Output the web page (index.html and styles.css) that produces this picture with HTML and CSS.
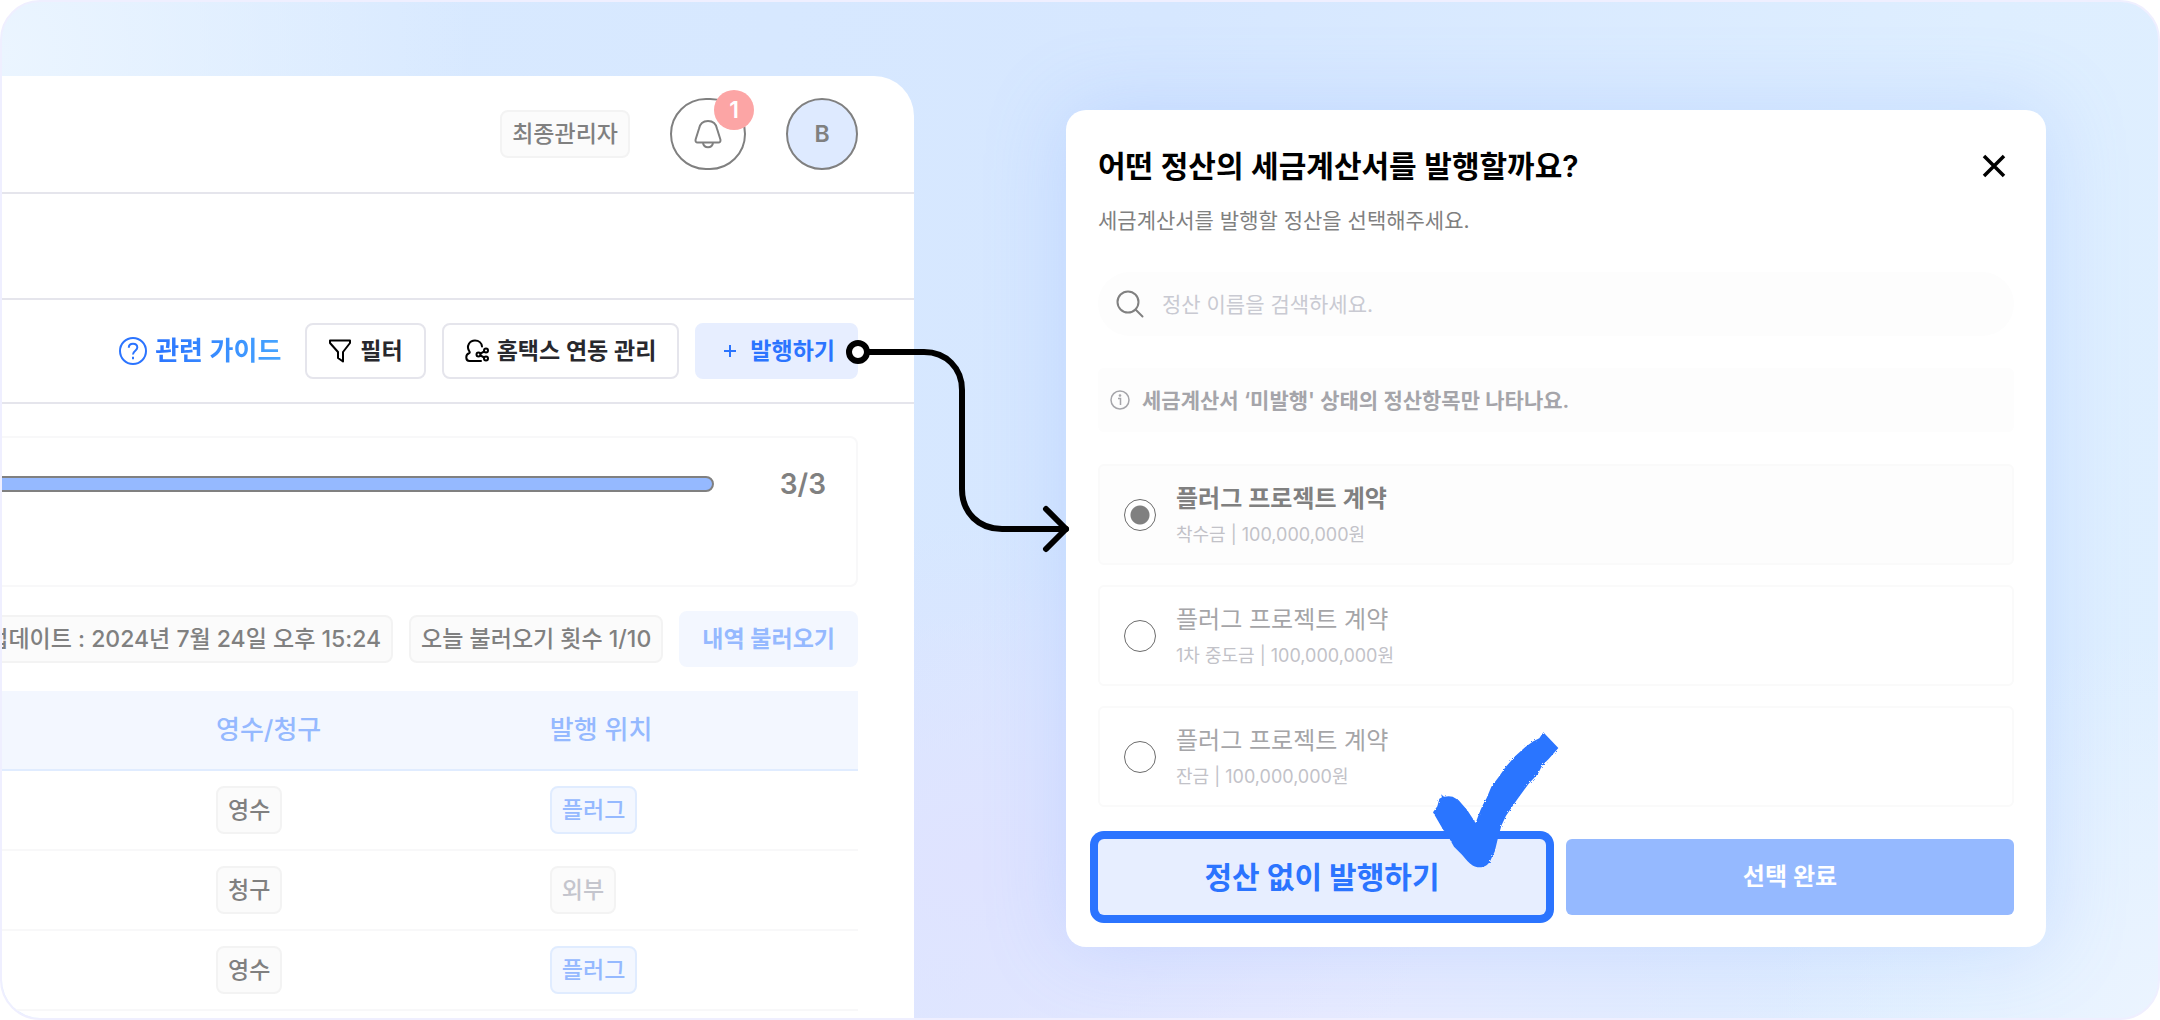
FILE: index.html
```html
<!DOCTYPE html>
<html lang="ko">
<head>
    <meta charset="utf-8" />
    <meta name="viewport" content="width=device-width, initial-scale=1" />
    <title>세금계산서 발행</title>
    <link rel="stylesheet" href="styles.css">
</head>
<body>
    <div class="scene">
        <main class="admin">
            <header class="topbar">
                <span class="tag">최종관리자</span>
                <button class="round bell" type="button" aria-label="알림">
                    <svg width="28" height="30" viewBox="0 0 28 30" fill="none" stroke="currentColor" stroke-width="2" stroke-linejoin="round">
                        <path d="M14 2C9 2 5.800 5.200 4.900 10L1.600 20.500C1.200 22.500 2 23.500 3.500 23.500H24.500C26 23.500 26.800 22.500 26.400 20.500L23.100 10C22.200 5.200 19 2 14 2Z" />
                        <path d="M9 24C9.500 27 11.500 28.300 14 28.300S18.500 27 19 24" />
                    </svg>
                    <span class="count">1</span>
                </button>
                <button class="round avatar" type="button">B</button>
            </header>
            <div class="subbar"></div>
            <div class="toolbar">
                <a class="guide" href="#">
                    <svg width="28" height="28" viewBox="0 0 28 28" fill="none" stroke="#2b74ff" stroke-width="2">
                        <circle cx="14" cy="14" r="13" />
                        <path d="M9.800 10.800C9.800 8.300 11.600 6.800 14 6.800S18.300 8.300 18.300 10.600C18.300 13.700 14 13.700 14 17.400" />
                        <path d="M14 19.800V22.200" />
                    </svg>
                    <span>관련 가이드</span>
                </a>
                <button class="btn" type="button">
                    <svg width="24" height="24" viewBox="0 0 24 24" fill="none" stroke="#000" stroke-width="2" stroke-linejoin="round">
                        <path d="M2 1.500H22V4L15 13V22.500L10 19V13L2 4Z" />
                    </svg>
                    필터
                </button>
                <button class="btn" type="button">
                    <svg width="24" height="24" viewBox="0 0 24 24" fill="none" stroke="#000" stroke-width="2" stroke-linecap="round">
                        <path d="M16 22H4.500C.4 22 .2 15.500 4 14.200C5 13.800 5 13.300 4.300 12.200C1 7 4.500 1.600 10 1.600C14 1.600 16.600 4.300 17 7.500" />
                        <circle cx="13.500" cy="15.500" r="2" />
                        <circle cx="21" cy="11.500" r="2" />
                        <circle cx="21" cy="19.500" r="2" />
                        <path d="M15.300 14.600L19.200 12.500M15.300 16.400L19.200 18.500" />
                    </svg>
                    홈택스 연동 관리
                </button>
                <button class="btn btn-issue" type="button">
                    <svg width="24" height="24" viewBox="0 0 24 24" fill="none" stroke="currentColor" stroke-width="2">
                        <path d="M12 6V18M6 12H18" />
                    </svg>
                    발행하기
                </button>
                <!-- arrow to the dialog -->
                <svg class="connector" width="232" height="220" viewBox="0 0 232 220" fill="none" stroke="#000" stroke-width="6" stroke-linecap="round" stroke-linejoin="round">
                    <path d="M26 16H82C104 16 120 32 120 54V153C120 177 137 193 160 193H224" />
                    <path d="M204 173L224 193L204 213" />
                    <circle cx="16" cy="16" r="9" fill="#fff" />
                </svg>
            </div>
            <section class="status">
                <div class="bar"></div>
                <span class="ratio">3/3</span>
            </section>
            <div class="sync">
                <span class="tag">업데이트 : 2024년 7월 24일 오후 15:24</span>
                <span class="tag">오늘 불러오기 횟수 1/10</span>
                <button class="btn btn-soft" type="button">내역 불러오기</button>
            </div>
            <table class="list">
                <thead>
                    <tr><th class="c1"></th><th class="c2">영수/청구</th><th>발행 위치</th></tr>
                </thead>
                <tbody>
                    <tr><td></td><td><span class="tag">영수</span></td><td><span class="tag tag-blue">플러그</span></td></tr>
                    <tr><td></td><td><span class="tag">청구</span></td><td><span class="tag tag-mute">외부</span></td></tr>
                    <tr><td></td><td><span class="tag">영수</span></td><td><span class="tag tag-blue">플러그</span></td></tr>
                </tbody>
            </table>
        </main>

        <form class="modal" role="dialog" aria-labelledby="dialog-title">
            <div class="modal-head">
                <h2 id="dialog-title">어떤 정산의 세금계산서를 발행할까요?</h2>
                <button class="close" type="button" aria-label="닫기">
                    <svg width="24" height="24" viewBox="0 0 24 24" fill="none" stroke="#000" stroke-width="3.500">
                        <path d="M2 2L22 22M22 2L2 22" />
                    </svg>
                </button>
            </div>
            <p class="desc">세금계산서를 발행할 정산을 선택해주세요.</p>
            <label class="search">
                <svg width="28" height="28" viewBox="0 0 28 28" fill="none" stroke="#808080" stroke-width="2" stroke-linecap="round">
                    <circle cx="12" cy="12" r="10.500" />
                    <path d="M19.500 19.500L26.500 26.500" />
                </svg>
                <input type="search" aria-label="정산 검색" placeholder="정산 이름을 검색하세요." />
            </label>
            <p class="info">
                <svg width="20" height="20" viewBox="0 0 20 20" fill="none" stroke="#a5a5aa" stroke-width="1.500">
                    <circle cx="10" cy="10" r="9" />
                    <path d="M8 8.500H10.500V15" />
                    <circle cx="10" cy="5.500" r=".6" />
                </svg>
                세금계산서 ‘미발행' 상태의 정산항목만 나타나요.
            </p>
            <div class="options">
                <label class="option">
                    <input type="radio" name="contract" checked />
                    <span><b>플러그 프로젝트 계약</b><small>착수금 | 100,000,000원</small></span>
                </label>
                <label class="option">
                    <input type="radio" name="contract" />
                    <span><b>플러그 프로젝트 계약</b><small>1차 중도금 | 100,000,000원</small></span>
                </label>
                <label class="option">
                    <input type="radio" name="contract" />
                    <span><b>플러그 프로젝트 계약</b><small>잔금 | 100,000,000원</small></span>
                </label>
            </div>
            <div class="actions">
                <button class="action action-skip" type="button">
                    정산 없이 발행하기
                    <svg class="check" width="128" height="138" viewBox="0 0 384 414">
                        <filter id="rough" x="-5%" y="-5%" width="110%" height="110%">
                            <feTurbulence type="fractalNoise" baseFrequency=".3" numOctaves="2" seed="4" />
                            <feDisplacementMap in="SourceGraphic" scale="8" />
                        </filter>
                        <path filter="url(#rough)" fill="#2b74ff" d="M3 244L16 226L22 203L30 199L27 190L36 197L50 196L62 197L80 208L106 238L131 276C139 252 149 226 164 201L178 167L200 138L221 108L250 75L280 48L304 31L322 22L334 4L379 51L350 84L331 103L318 128L290 158L274 180L256 205L240 228L222 254L208 284L197 325L188 362L180 378C172 400 160 409 142 409C126 409 117 401 106 390L90 371L66 347L48 315L30 290Z" />
                    </svg>
                </button>
                <button class="action action-done" type="submit">선택 완료</button>
            </div>
        </form>
    </div>
</body>
</html>
```

FILE: styles.css
```css
:root {
    --blue: #2b74ff;
    --blue-light: #95b9ff;
    --gray: #808080;
    --line: #e5e5ec;
}
* {
    box-sizing: border-box;
}
body {
    margin: 0;
    background: #fff;
    color: var(--gray);
    font-family: Inter, "Noto Sans CJK KR", sans-serif;
    font-size: 23px;
    font-weight: 600;
    line-height: 1;
}
button, input {
    font: inherit;
    color: inherit;
}
button {
    padding: 0;
    border: none;
    white-space: nowrap;
}
p, h2 {
    margin: 0;
}
svg {
    flex: none;
}
.scene {
    display: grid;
    grid-template-columns: 912fr 152px 980fr 112px;
    min-height: 100vh;
    padding-top: 74px;
    overflow: hidden;
    border: 2px solid #efefff;
    border-radius: 40px;
    background:
        radial-gradient(circle at 0 5%, #ebf5ff 0, rgba(235, 245, 255, 0) 20%),
        radial-gradient(circle at 100% 100%, #ebf4ff 0, rgba(235, 244, 255, 0) 16%),
        radial-gradient(ellipse at 45% 85%, #dfe3ff 0, rgba(223, 227, 255, 0) 28%),
        radial-gradient(ellipse at 60% 105%, #e9ebff 0, rgba(233, 235, 255, 0) 36%),
        linear-gradient(100deg, #d9eaff 0, #d6e7ff 50%, #deeeff 85%, #dfefff 100%);
}

/* admin page */
.admin {
    min-width: 0;
    background: #fff;
    border-top-right-radius: 40px;
}
.topbar {
    display: flex;
    align-items: center;
    justify-content: flex-end;
    gap: 40px;
    height: 118px;
    padding: 0 56px;
    border-bottom: 2px solid var(--line);
}
.tag {
    display: inline-block;
    height: 48px;
    padding: 0 10px;
    line-height: 44px;
    font-weight: 500;
    white-space: nowrap;
    color: var(--gray);
    background: #fbfbfb;
    border: 2px solid #f3f3f3;
    border-radius: 8px;
}
.tag-blue {
    color: var(--blue-light);
    background: #f3f7ff;
    border-color: #e0ecff;
}
.tag-mute {
    color: #c4c5cd;
}
.round {
    position: relative;
    display: flex;
    align-items: center;
    justify-content: center;
    width: 72px;
    height: 72px;
    border: 2px solid var(--gray);
    border-radius: 36px;
    background: #fff;
}
.bell {
    width: 76px;
}
.avatar {
    background: #deeaff;
}
.count {
    position: absolute;
    top: -10px;
    right: -10px;
    width: 40px;
    line-height: 40px;
    border-radius: 50%;
    background: #fca5a5;
    color: #fff;
}
.subbar {
    height: 106px;
    border-bottom: 2px solid var(--line);
}
.toolbar {
    position: relative;
    display: flex;
    align-items: center;
    justify-content: flex-end;
    gap: 16px;
    height: 104px;
    padding: 0 56px;
    border-bottom: 2px solid var(--line);
}
.guide {
    display: flex;
    align-items: center;
    gap: 8px;
    margin-right: 8px;
    font-size: 26px;
    line-height: 40px;
    text-decoration: none;
    white-space: nowrap;
}
.guide span {
    background: linear-gradient(90deg, var(--blue), #46a5ff);
    -webkit-background-clip: text;
    background-clip: text;
    color: transparent;
}
.btn {
    display: flex;
    align-items: center;
    gap: 8px;
    height: 56px;
    padding: 0 21px;
    border: 2px solid var(--line);
    border-radius: 8px;
    background: #fff;
    color: #28282d;
}
.btn-issue {
    border-color: #e7eeff;
    background: #e7eeff;
    color: var(--blue);
}
.btn-soft {
    border-color: #f3f7ff;
    background: #f3f7ff;
    color: var(--blue-light);
}
.connector {
    position: absolute;
    left: calc(100% - 72px);
    top: 36px;
    z-index: 2;
}
.status {
    display: flex;
    align-items: flex-start;
    gap: 66px;
    min-height: 151px;
    margin: 32px 56px 24px -10px;
    padding: 26px 30px;
    border: 2px solid #f8f8f9;
    border-radius: 8px;
}
.bar {
    flex: 1;
    height: 16px;
    margin: 12px 0 0 -50px;
    border: 2px solid var(--gray);
    border-radius: 8px;
    background: var(--blue-light);
}
.ratio {
    font-size: 28px;
    line-height: 40px;
}
.sync {
    display: flex;
    align-items: center;
    justify-content: flex-end;
    gap: 16px;
    margin: 0 56px 24px 0;
}
.list {
    width: calc(100% - 56px);
    table-layout: fixed;
    border-spacing: 0;
}
.list th, .list td {
    height: 80px;
    padding: 0;
    text-align: left;
    border-bottom: 2px solid #f8f8f9;
}
.list td .tag {
    vertical-align: middle;
}
.list th {
    color: var(--blue-light);
    background: #f3f7ff;
    border-color: #e0ecff;
    font-size: 26px;
    font-weight: 500;
    line-height: 40px;
}
.c1 {
    width: 25%;
}
.c2 {
    width: 39%;
}

/* dialog */
.modal {
    grid-column: 3;
    align-self: start;
    margin: 34px 0;
    padding: 32px;
    border-radius: 20px;
    background: #fff;
    box-shadow: 0 0 80px rgba(120, 165, 255, 0.25);
}
.modal-head {
    display: flex;
    align-items: center;
    justify-content: space-between;
}
.modal-head h2 {
    color: #000;
    font-size: 30px;
    font-weight: 600;
    line-height: 48px;
}
.close {
    display: flex;
    align-items: center;
    justify-content: center;
    width: 40px;
    height: 40px;
    background: none;
}
.desc {
    margin: 16px 0 36px;
    font-size: 21px;
    font-weight: 400;
    line-height: 30px;
}
.search {
    display: flex;
    align-items: center;
    gap: 18px;
    height: 64px;
    padding: 0 18px;
    border-radius: 32px;
    background: #fdfdfd;
}
.search input {
    flex: 1;
    padding: 0;
    border: none;
    outline: none;
    background: none;
    font-size: 21px;
    font-weight: 400;
}
.search input::placeholder {
    color: #c9cad2;
}
.info {
    display: flex;
    align-items: center;
    gap: 12px;
    height: 64px;
    margin: 32px 0;
    padding: 0 12px;
    border-radius: 6px;
    background: #fdfdfd;
    color: #a5a5aa;
    font-size: 21px;
}
.options {
    display: grid;
    gap: 20px;
    margin-bottom: 32px;
}
.option {
    display: flex;
    align-items: center;
    gap: 20px;
    padding: 13px 24px 12px;
    border: 2px solid #fafafa;
    border-radius: 6px;
}
.option b, .option small {
    display: block;
}
.option b {
    color: #a5a5a8;
    font-size: 24px;
    font-weight: 400;
    line-height: 40px;
}
.option small {
    color: #c2c2c8;
    font-size: 18px;
    font-weight: 400;
    line-height: 32px;
}
.option input {
    appearance: none;
    flex: none;
    width: 32px;
    height: 32px;
    margin: 0;
    border: 1px solid #6c6c6c;
    border-radius: 50%;
    background: #fff;
}
.option input:checked {
    background: radial-gradient(circle, var(--gray) 9px, #fff 10px);
}
.option:has(:checked) {
    background: #fdfdfd;
}
.option:has(:checked) b {
    color: var(--gray);
    font-weight: 600;
}
.actions {
    display: flex;
    gap: 20px;
}
.action {
    flex: 1;
    height: 76px;
    border-radius: 6px;
}
.action-skip {
    position: relative;
    background: #e7eeff;
    box-shadow: 0 0 0 8px var(--blue);
    color: var(--blue);
    font-size: 30px;
    font-weight: 700;
}
.action-done {
    background: var(--blue-light);
    color: #fff;
    font-size: 24px;
}
.check {
    position: absolute;
    right: -14px;
    bottom: 46px;
}
```
